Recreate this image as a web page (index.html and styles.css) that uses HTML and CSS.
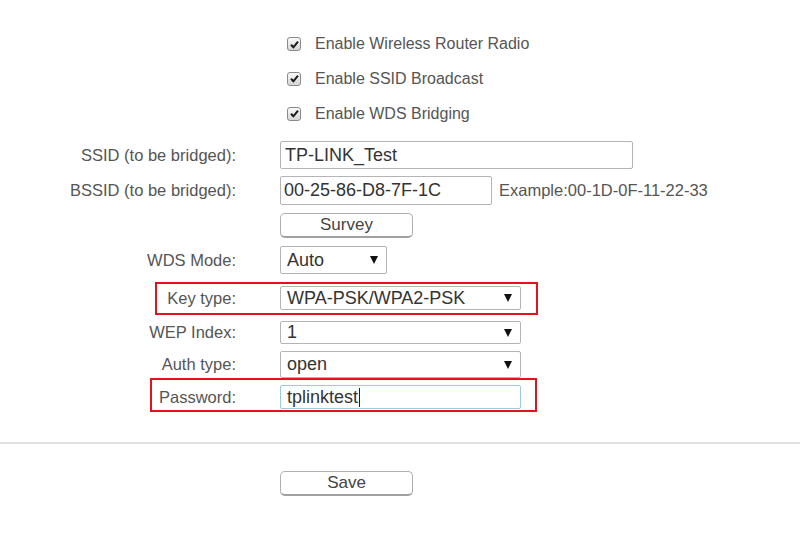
FILE: index.html
```html
<!DOCTYPE html>
<html lang="en">
<head>
    <meta charset="UTF-8">
    <title>Wireless Settings</title>
    <link rel="stylesheet" href="styles.css">
</head>
<body>
    <div class="form">
        <div class="row check-row">
            <span class="label"></span>
            <span class="cb"><svg viewBox="0 0 13 13" width="13" height="13"><path d="M3 6.8 L5.4 9.3 L10 3.6" fill="none" stroke="#1a1a1a" stroke-width="2"/></svg></span>
            <span class="cb-text">Enable Wireless Router Radio</span>
        </div>
        <div class="row check-row">
            <span class="label"></span>
            <span class="cb"><svg viewBox="0 0 13 13" width="13" height="13"><path d="M3 6.8 L5.4 9.3 L10 3.6" fill="none" stroke="#1a1a1a" stroke-width="2"/></svg></span>
            <span class="cb-text">Enable SSID Broadcast</span>
        </div>
        <div class="row check-row">
            <span class="label"></span>
            <span class="cb"><svg viewBox="0 0 13 13" width="13" height="13"><path d="M3 6.8 L5.4 9.3 L10 3.6" fill="none" stroke="#1a1a1a" stroke-width="2"/></svg></span>
            <span class="cb-text">Enable WDS Bridging</span>
        </div>

        <div class="row ssid-row">
            <span class="label">SSID (to be bridged):</span>
            <div class="field ssid">TP-LINK_Test</div>
        </div>
        <div class="row bssid-row">
            <span class="label">BSSID (to be bridged):</span>
            <div class="field bssid">00-25-86-D8-7F-1C</div>
            <span class="hint">Example:00-1D-0F-11-22-33</span>
        </div>
        <div class="row survey-row">
            <span class="label"></span>
            <div class="btn">Survey</div>
        </div>
        <div class="row mode-row">
            <span class="label">WDS Mode:</span>
            <div class="select short">Auto</div>
        </div>
        <div class="row key-row hl">
            <span class="label">Key type:</span>
            <div class="select wide">WPA-PSK/WPA2-PSK</div>
        </div>
        <div class="row wep-row">
            <span class="label">WEP Index:</span>
            <div class="select wide">1</div>
        </div>
        <div class="row auth-row">
            <span class="label">Auth type:</span>
            <div class="select wide">open</div>
        </div>
        <div class="row pass-row hl">
            <span class="label">Password:</span>
            <div class="field pass">tplinktest<span class="caret"></span></div>
        </div>
    </div>

    <div class="divider"></div>

    <div class="row save-row">
        <span class="label"></span>
        <div class="btn">Save</div>
    </div>
</body>
</html>
```

FILE: styles.css
```css
body {
    margin: 0;
    background: #fff;
    font-family: "Liberation Sans", Arial, sans-serif;
    color: #555;
}
.form {
    padding-top: 27px;
}
.row {
    display: flex;
    align-items: center;
    position: relative;
}
.label {
    flex: none;
    width: 236px;
    margin-right: 44px;
    text-align: right;
    font-size: 16.5px;
    color: #555;
}

/* checkboxes */
.check-row {
    height: 35px;
}
.check-row:first-child {
    height: 34px;
}
.cb {
    box-sizing: border-box;
    width: 14px;
    height: 14px;
    margin-left: 7px;
    margin-right: 14px;
    border: 1px solid #8a8a8a;
    border-radius: 3px;
    background: linear-gradient(#fafafa, #d6d6d6);
    display: flex;
    align-items: center;
    justify-content: center;
}
.cb svg {
    display: block;
    margin: -1px;
}
.cb-text {
    font-size: 16px;
    color: #555;
}

/* text fields */
.field {
    box-sizing: border-box;
    border: 1px solid #b4b4b4;
    border-radius: 2px;
    font-size: 18px;
    color: #333;
    display: flex;
    align-items: center;
    padding-left: 4px;
}
.ssid-row {
    margin-top: 10px;
}
.ssid {
    width: 353px;
    height: 28px;
}
.bssid-row {
    margin-top: 7px;
}
.bssid {
    width: 212px;
    height: 29px;
    padding-left: 3px;
}
.hint {
    margin-left: 7px;
    font-size: 16.5px;
    color: #555;
}

/* buttons */
.btn {
    box-sizing: border-box;
    width: 133px;
    height: 25px;
    border: 1px solid #b0b0b0;
    border-bottom: 2px solid #a0a0a0;
    border-radius: 5px;
    background: #fff;
    text-align: center;
    font-size: 17px;
    line-height: 22px;
    color: #444;
}
.survey-row {
    margin-top: 8px;
}

/* selects */
.select {
    box-sizing: border-box;
    position: relative;
    border: 1px solid #b4b4b4;
    border-radius: 2px;
    padding-left: 6px;
    font-size: 18px;
    color: #333;
    display: flex;
    align-items: center;
}
.select::after {
    content: "";
    position: absolute;
    right: 8px;
    top: 50%;
    margin-top: -4px;
    border-left: 4px solid transparent;
    border-right: 4px solid transparent;
    border-top: 8px solid #111;
}
.short {
    width: 107px;
}
.wide {
    width: 241px;
}
.mode-row {
    margin-top: 8px;
}
.mode-row .select {
    height: 28px;
}
.key-row {
    margin-top: 12px;
}
.key-row .select {
    height: 24px;
}
.wep-row {
    margin-top: 11px;
}
.wep-row .select {
    height: 23px;
}
.auth-row {
    margin-top: 7px;
}
.auth-row .select {
    height: 27px;
}
.pass-row {
    margin-top: 7px;
}
.pass {
    width: 241px;
    height: 24px;
    padding-left: 6px;
    border-color: #9ccbe0;
}
.caret {
    display: inline-block;
    width: 0;
    height: 19px;
    border-left: 1.5px solid #222;
    margin-left: 1px;
}

/* red highlight frames */
.hl::before {
    content: "";
    position: absolute;
    box-sizing: border-box;
    border: 2px solid #e3131b;
    pointer-events: none;
}
.key-row::before {
    left: 155px;
    width: 383px;
    top: -4px;
    bottom: -5px;
}
.pass-row::before {
    left: 150px;
    width: 387px;
    top: -7px;
    bottom: -3px;
}

.divider {
    height: 2px;
    background: #e2e2e2;
    margin-top: 33px;
}
.save-row {
    margin-top: 27px;
}
```
